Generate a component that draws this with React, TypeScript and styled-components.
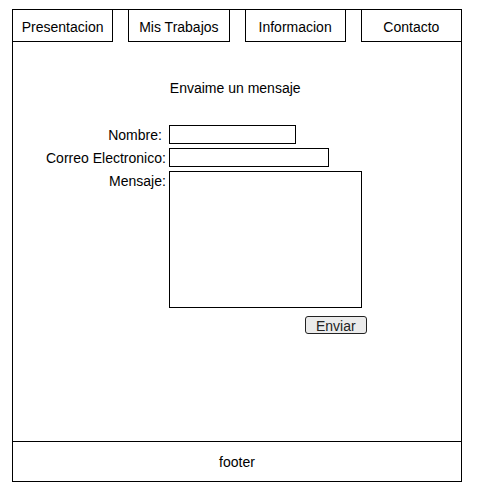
import React from "react";
import styled, { createGlobalStyle } from "styled-components";

const GlobalStyle = createGlobalStyle`
  *, *::before, *::after {
    box-sizing: border-box;
  }
  body {
    margin: 0;
    background: #fff;
    color: #000;
    font: 14px/16px "Liberation Sans", Arial, sans-serif;
  }
`;

const Page = styled.div`
  display: flex;
  flex-direction: column;
  min-height: 100vh;
  padding: 9px 18px 9px 12px;
`;

const Frame = styled.div`
  flex: 1;
  display: flex;
  flex-direction: column;
  border: 1px solid #000;
`;

const Nav = styled.nav`
  display: grid;
  grid-template-columns: repeat(4, 1fr);
  gap: 15px;
  margin: -1px;
`;

const NavLink = styled.a`
  padding: 9px 0 6px;
  border: 1px solid #000;
  color: inherit;
  text-align: center;
  text-decoration: none;
`;

const Main = styled.main`
  flex: 1;
  padding: 39px 33px;
`;

const Form = styled.form`
  display: grid;
  grid-template-columns: max-content max-content;
  gap: 4px 3px;
`;

const Title = styled.h1`
  grid-column: 2;
  margin: 0 0 25px;
  padding-left: 1px;
  font-size: 14px;
  font-weight: normal;
`;

const Label = styled.label<{ $inset?: boolean }>`
  padding-top: 2px;
  padding-right: ${({ $inset }) => ($inset ? 4 : 0)}px;
  text-align: right;
`;

const TextInput = styled.input<{ $width: number }>`
  width: ${({ $width }) => $width}px;
  height: 19px;
  padding: 0 3px;
  border: 1px solid #000;
  background: #fff;
  font: inherit;
  line-height: 16px;
`;

const MessageBox = styled.textarea`
  width: 193px;
  height: 137px;
  padding: 2px 3px;
  border: 1px solid #000;
  background: #fff;
  font: inherit;
  resize: none;
`;

const SubmitButton = styled.button`
  grid-column: 2;
  justify-self: end;
  width: 62px;
  height: 18px;
  margin: 4px -5px 0 0;
  padding: 1px 0 0;
  border: 1px solid #222;
  border-radius: 3px;
  background: #ebebeb;
  color: #222;
  font: inherit;
`;

const Footer = styled.footer`
  padding: 12px 0 11px;
  border-top: 1px solid #000;
  text-align: center;
`;

const links = ["Presentacion", "Mis Trabajos", "Informacion", "Contacto"];

export default function App() {
  return (
    <>
      <GlobalStyle />
      <Page>
        <Frame>
          <Nav>
            {links.map((name) => (
              <NavLink key={name} href="#">
                {name}
              </NavLink>
            ))}
          </Nav>
          <Main>
            <Form onSubmit={(event) => event.preventDefault()}>
              <Title>Envaime un mensaje</Title>
              <Label htmlFor="nombre" $inset>
                Nombre:
              </Label>
              <TextInput id="nombre" type="text" $width={127} />
              <Label htmlFor="correo">Correo Electronico:</Label>
              <TextInput id="correo" type="email" $width={160} />
              <Label htmlFor="mensaje">Mensaje:</Label>
              <MessageBox id="mensaje" />
              <SubmitButton type="submit">Enviar</SubmitButton>
            </Form>
          </Main>
          <Footer>footer</Footer>
        </Frame>
      </Page>
    </>
  );
}
